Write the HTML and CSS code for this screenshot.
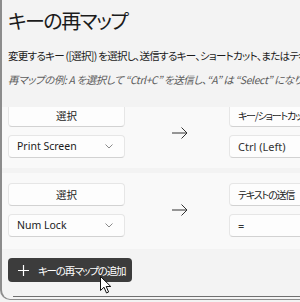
FILE: index.html
```html
<!DOCTYPE html>
<html>
  <head>
    <title>キーの再マップ</title>
    <link rel="stylesheet" href="styles.css">
  </head>
  <body>
    <div class="window">
      <div class="header">
        <h1 class="title">キーの再マップ</h1>
        <p class="desc">変更するキー ([選択]) を選択し、送信するキー、ショートカット、またはテキストを選択します。</p>
        <p class="example">再マップの例: A を選択して “Ctrl+C” を送信し、“A” は “Select” になり、“Ctrl+C” を押すと A が送信されます。</p>
      </div>

      <div class="list">
        <div class="card first">
          <div class="col">
            <div class="btn center">選択</div>
            <div class="btn drop">Print Screen
              <svg class="chev" width="8" height="5" viewBox="0 0 8 5"><path d="M0.5 0.5 L4 4 L7.5 0.5" fill="none" stroke="#8a8a8a" stroke-width="1"/></svg>
            </div>
          </div>
          <div class="arrow">
            <svg width="16" height="12" viewBox="0 0 16 12"><path d="M0 6 H15 M9.5 0.5 L15 6 L9.5 11.5" fill="none" stroke="#333" stroke-width="1"/></svg>
          </div>
          <div class="col wide">
            <div class="btn jp">キー/ショートカット</div>
            <div class="btn field">Ctrl (Left)</div>
          </div>
        </div>

        <div class="card">
          <div class="col">
            <div class="btn center">選択</div>
            <div class="btn drop">Num Lock
              <svg class="chev" width="8" height="5" viewBox="0 0 8 5"><path d="M0.5 0.5 L4 4 L7.5 0.5" fill="none" stroke="#8a8a8a" stroke-width="1"/></svg>
            </div>
          </div>
          <div class="arrow">
            <svg width="16" height="12" viewBox="0 0 16 12"><path d="M0 6 H15 M9.5 0.5 L15 6 L9.5 11.5" fill="none" stroke="#333" stroke-width="1"/></svg>
          </div>
          <div class="col wide">
            <div class="btn jp">テキストの送信</div>
            <div class="btn field">=</div>
          </div>
        </div>
      </div>

      <div class="actions">
        <div class="add">
          <svg width="11" height="11" viewBox="0 0 11 11"><path d="M5.5 0 V11 M0 5.5 H11" stroke="#fff" stroke-width="1.2"/></svg>
          <span>キーの再マップの追加</span>
        </div>
        <svg class="cursor" width="12" height="18" viewBox="0 0 12 18"><path d="M0.5 0.5 V14.5 L4 11.2 L6.5 17 L8.6 16 L6.2 10.5 L10.8 10.5 Z" fill="#fff" stroke="#111" stroke-width="1"/></svg>
      </div>

      <div class="rule"></div>
    </div>
  </body>
</html>
```

FILE: styles.css
```css
body {
  margin: 0;
  background: #f3f3f3;
  font-family: "Noto Sans", "Noto Sans CJK JP", sans-serif;
  font-feature-settings: "palt";
  color: #1b1b1b;
}

.window {
  box-sizing: border-box;
  height: 300px;
  border-left: 2px solid #8c8c8c;
  border-bottom: 1px solid #8c8c8c;
  border-bottom-left-radius: 10px;
  background: #f3f3f3;
  display: flex;
  flex-direction: column;
  overflow: hidden;
}

.header {
  padding: 7px 0 0 6px;
  white-space: nowrap;
  overflow: hidden;
}

.title {
  margin: 0;
  font-family: "Noto Sans CJK JP", sans-serif;
  font-size: 20px;
  font-weight: normal;
  line-height: 28px;
  letter-spacing: -1.5px;
}

.desc {
  margin: 13px 0 0 0;
  font-family: "Noto Sans CJK JP", sans-serif;
  font-size: 10.5px;
  line-height: 16px;
  letter-spacing: -0.7px;
}

.example {
  margin: 8px 0 0 0;
  font-family: "Noto Sans CJK JP", sans-serif;
  font-size: 10.5px;
  line-height: 16px;
  letter-spacing: -0.4px;
  font-style: italic;
  color: #5c5c5c;
}

.list {
  margin-top: 19px;
  display: flex;
  flex-direction: column;
  gap: 5px;
}

.card {
  background: #f9f9f9;
  display: flex;
  align-items: center;
  padding: 10px 0 12px 6px;
  overflow: hidden;
}

.card.first {
  padding-top: 0;
  padding-bottom: 10px;
}

.card.first .col {
  margin-top: -3px;
}

.col {
  width: 117px;
  flex-shrink: 0;
  display: flex;
  flex-direction: column;
  gap: 8px;
}

.col.wide {
  width: 160px;
}

.arrow {
  width: 104px;
  flex-shrink: 0;
  display: flex;
  justify-content: center;
  padding-left: 6px;
  box-sizing: border-box;
}

.btn {
  box-sizing: border-box;
  height: 23px;
  background: #fdfdfd;
  border: 1px solid #e6e6e6;
  border-bottom-color: #d2d2d2;
  border-radius: 4px;
  font-size: 10.5px;
  line-height: 21px;
  padding: 0 8px;
  white-space: nowrap;
  overflow: hidden;
  display: flex;
  align-items: center;
}

.btn.center {
  justify-content: center;
  font-family: "Noto Sans CJK JP", sans-serif;
}

.btn.jp {
  font-family: "Noto Sans CJK JP", sans-serif;
  font-size: 10px;
  letter-spacing: -1.2px;
}

.btn.drop {
  justify-content: space-between;
  padding-right: 11px;
}

.btn.field {
  color: #333;
  font-size: 11px;
}

.chev {
  display: block;
}

.actions {
  padding: 9px 0 0 6px;
  display: flex;
  position: relative;
}

.add {
  height: 24px;
  width: 124px;
  box-sizing: border-box;
  background: #3c3c3c;
  border-radius: 4px;
  color: #fff;
  font-family: "Noto Sans CJK JP", sans-serif;
  font-size: 10.5px;
  letter-spacing: -1.2px;
  white-space: nowrap;
  display: flex;
  align-items: center;
  gap: 9px;
  padding-left: 10px;
}

.add svg {
  display: block;
  flex-shrink: 0;
}

.cursor {
  position: absolute;
  left: 98px;
  top: 27px;
}

.rule {
  margin: auto 0 2px 11px;
  border-top: 1px solid #6f6f6f;
}
```
